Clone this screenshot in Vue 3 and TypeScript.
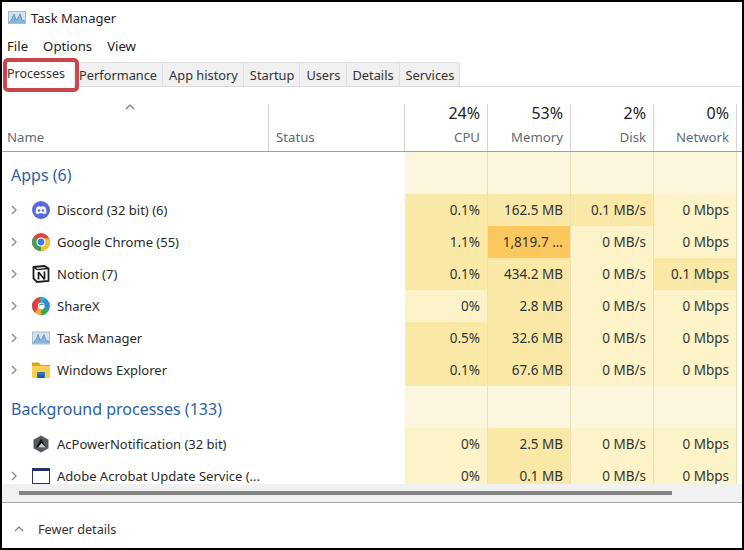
<script setup lang="ts">
type Row = { name: string; icon: string; expand: boolean; cells: { v: string; h: number }[] };
type Group = { title: string; rows: Row[] };

const c = (v: string, h = 0) => ({ v, h });

const groups: Group[] = [
  {
    title: 'Apps (6)',
    rows: [
      { name: 'Discord (32 bit) (6)', icon: 'discord', expand: true, cells: [c('0.1%', 1), c('162.5 MB', 1), c('0.1 MB/s', 1), c('0 Mbps')] },
      { name: 'Google Chrome (55)', icon: 'chrome', expand: true, cells: [c('1.1%', 1), c('1,819.7 ...', 3), c('0 MB/s'), c('0 Mbps')] },
      { name: 'Notion (7)', icon: 'notion', expand: true, cells: [c('0.1%', 1), c('434.2 MB', 1), c('0 MB/s'), c('0.1 Mbps', 1)] },
      { name: 'ShareX', icon: 'sharex', expand: true, cells: [c('0%'), c('2.8 MB', 1), c('0 MB/s'), c('0 Mbps')] },
      { name: 'Task Manager', icon: 'taskmgr', expand: true, cells: [c('0.5%', 1), c('32.6 MB', 1), c('0 MB/s'), c('0 Mbps')] },
      { name: 'Windows Explorer', icon: 'explorer', expand: true, cells: [c('0.1%', 1), c('67.6 MB', 1), c('0 MB/s'), c('0 Mbps')] },
    ],
  },
  {
    title: 'Background processes (133)',
    rows: [
      { name: 'AcPowerNotification (32 bit)', icon: 'acpower', expand: false, cells: [c('0%'), c('2.5 MB', 1), c('0 MB/s'), c('0 Mbps')] },
      { name: 'Adobe Acrobat Update Service (...', icon: 'window', expand: true, cells: [c('0%'), c('0.1 MB', 1), c('0 MB/s'), c('0 Mbps')] },
    ],
  },
];

const tabs = ['Performance', 'App history', 'Startup', 'Users', 'Details', 'Services'];
const metrics = [
  { pct: '24%', label: 'CPU' },
  { pct: '53%', label: 'Memory' },
  { pct: '2%', label: 'Disk' },
  { pct: '0%', label: 'Network' },
];
</script>

<template>
  <div class="frame">
    <div class="window">
      <div class="title">
        <svg class="ticon" viewBox="0 0 18 13">
          <rect x="0.5" y="0.5" width="17" height="12" fill="#d3e3f0" stroke="#a9bccb" />
          <path d="M1 12 L4 8 L6 3 L8 9 L10 7 L12 3 L14 9 L17 10 V12 H1 Z" fill="#84b6de" />
          <path d="M1 12 L4 8 L6 3 L8 9 L10 7 L12 3 L14 9 L17 10" fill="none" stroke="#4f8cc2" stroke-width="0.8" />
        </svg>
        <span>Task Manager</span>
      </div>
      <div class="menu"><span>File</span><span>Options</span><span>View</span></div>
      <div class="tabs">
        <div class="tab active">Processes</div>
        <div v-for="t in tabs" :key="t" class="tab">{{ t }}</div>
      </div>
      <div class="highlight"></div>

      <div class="head">
        <div class="hname">
          <svg class="sort" viewBox="0 0 10 6"><path d="M1 5 L5 1 L9 5" fill="none" stroke="#7a7a7a" stroke-width="1.2" /></svg>
          <span class="hlabel">Name</span>
        </div>
        <div class="hstatus"><span class="hlabel">Status</span></div>
        <div v-for="m in metrics" :key="m.label" class="hmetric">
          <span class="pct">{{ m.pct }}</span>
          <span class="hlabel">{{ m.label }}</span>
        </div>
      </div>

      <div class="body">
        <template v-for="g in groups" :key="g.title">
          <div class="grow">
            <div class="gtitle">{{ g.title }}</div>
            <div v-for="n in 4" :key="n" class="gcell"></div>
          </div>
          <div v-for="r in g.rows" :key="r.name" class="row">
            <div class="rname">
              <svg v-if="r.expand" class="chev" viewBox="0 0 6 10"><path d="M1 1 L5 5 L1 9" fill="none" stroke="#8a8a8a" stroke-width="1.4" /></svg>
              <span v-else class="chev"></span>

              <svg v-if="r.icon === 'discord'" class="icon" viewBox="0 0 18 18">
                <circle cx="9" cy="9" r="9" fill="#5b67dc" />
                <path d="M5 5.8 Q7 5 7.6 5.2 L7.9 5.8 H10.1 L10.4 5.2 Q11 5 13 5.8 Q14.6 8.6 14.4 12 Q13 13 11.6 13.2 L11 12.2 H7 L6.4 13.2 Q5 13 3.6 12 Q3.4 8.6 5 5.8 Z" fill="#fff" />
                <circle cx="7" cy="9.5" r="1.2" fill="#5b67dc" />
                <circle cx="11" cy="9.5" r="1.2" fill="#5b67dc" />
              </svg>
              <svg v-else-if="r.icon === 'chrome'" class="icon" viewBox="0 0 18 18">
                <circle cx="9" cy="9" r="9" fill="#d9473b" />
                <path d="M9 9 L1.2 4.5 A9 9 0 0 0 9 18 L13.5 9 Z" fill="#4a9c50" />
                <path d="M9 9 L9 18 A9 9 0 0 0 17.3 5.5 L9 5.5 Z" fill="#f2c230" />
                <circle cx="9" cy="9" r="4.6" fill="#fff" />
                <circle cx="9" cy="9" r="3.4" fill="#3f7fe0" />
              </svg>
              <svg v-else-if="r.icon === 'notion'" class="icon" viewBox="0 0 18 18">
                <path d="M1.5 2 L12.5 1 L16.5 3.5 V16 L5 17 L1.5 13.5 Z" fill="#fff" stroke="#1c1c1c" stroke-width="1.8" />
                <path d="M1.5 2 L5 4.6 L16.5 3.5" fill="none" stroke="#1c1c1c" stroke-width="1.4" />
                <path d="M6.5 7 V14.5 M6.5 7 L12.5 14.5 M12.5 6.5 V14.5" fill="none" stroke="#1c1c1c" stroke-width="1.7" />
              </svg>
              <svg v-else-if="r.icon === 'sharex'" class="icon" viewBox="0 0 18 18">
                <circle cx="9" cy="9" r="9" fill="#2a8fd8" />
                <path d="M9 0 A9 9 0 0 0 0 9 A9 9 0 0 0 3 15.7 L8 9 A4 4 0 0 1 11 4 Z" fill="#e2403a" />
                <path d="M3 15.7 A9 9 0 0 0 9 18 L11 13 A4 4 0 0 1 6 11 Z" fill="#f4b02a" />
                <path d="M9 18 A9 9 0 0 0 17 13 L12 10 A4 4 0 0 1 9 13.5 Z" fill="#3fa84d" />
                <path d="M9 0 A9 9 0 0 1 14 1.5 L10 5.5 L7.5 3 Z" fill="#27b3c7" />
                <circle cx="9.2" cy="9" r="3.4" fill="#fff" />
                <path d="M6.5 9.5 A3 3 0 0 1 12 8 A5 5 0 0 0 6.5 9.5 Z" fill="#2a8fd8" />
              </svg>
              <svg v-else-if="r.icon === 'taskmgr'" class="icon" viewBox="0 0 18 13" preserveAspectRatio="xMidYMid meet">
                <rect x="0.5" y="0.5" width="17" height="12" fill="#d3e3f0" stroke="#a9bccb" />
                <path d="M1 12 L4 8 L6 3 L8 9 L10 7 L12 3 L14 9 L17 10 V12 H1 Z" fill="#84b6de" />
                <path d="M1 12 L4 8 L6 3 L8 9 L10 7 L12 3 L14 9 L17 10" fill="none" stroke="#4f8cc2" stroke-width="0.8" />
              </svg>
              <svg v-else-if="r.icon === 'explorer'" class="icon" viewBox="0 0 18 16">
                <path d="M0 0.5 H7 L9 3 H18 V16 H0 Z" fill="#d9a520" />
                <path d="M0 4 H18 V16 H0 Z" fill="#fbcf4f" />
                <path d="M5 16 V11 Q5 10 6 10 H12 Q13 10 13 11 V16 Z" fill="#2f78b5" />
                <rect x="6" y="13" width="6" height="3" fill="#1f5f97" />
              </svg>
              <svg v-else-if="r.icon === 'acpower'" class="icon" viewBox="0 0 18 18">
                <path d="M9 0.5 L16.5 4.8 V13.2 L9 17.5 L1.5 13.2 V4.8 Z" fill="#55595e" />
                <path d="M9 3.5 L14 12.5 H4 Z" fill="#111315" />
                <path d="M9.5 8 L14 12.5 H6 Z" fill="#c7cbcf" />
              </svg>
              <svg v-else class="icon" viewBox="0 0 18 16">
                <rect x="0.5" y="0.5" width="17" height="15" fill="#fff" stroke="#26365c" />
                <rect x="1" y="1" width="16" height="2" fill="#1e2f80" />
              </svg>

              <span class="rtext">{{ r.name }}</span>
            </div>
            <div v-for="(cell, i) in r.cells" :key="i" class="cell" :class="'h' + cell.h">{{ cell.v }}</div>
          </div>
        </template>
      </div>

      <div class="hscroll"><div class="thumb"></div></div>

      <div class="footer">
        <svg class="fchev" viewBox="0 0 10 6"><path d="M1 5 L5 1 L9 5" fill="none" stroke="#777" stroke-width="1.1" /></svg>
        <span>Fewer details</span>
      </div>
    </div>
  </div>
</template>

<style>
html, body { margin: 0; background: #000; }
</style>

<style scoped>
.frame {
  width: 744px;
  height: 550px;
  box-sizing: border-box;
  padding: 2px 2px 2px 2px;
  background: #000;
  overflow: hidden;
}
.window {
  position: relative;
  width: 740px;
  height: 546px;
  background: #fff;
  display: flex;
  flex-direction: column;
  font-family: "Noto Sans", "Open Sans", sans-serif;
  font-size: 13px;
  color: #222;
}
.title {
  height: 31px;
  flex: none;
  display: flex;
  align-items: center;
  gap: 5px;
  padding-left: 6px;
}
.ticon { width: 18px; height: 13px; }
.menu {
  height: 26px;
  flex: none;
  display: flex;
  align-items: center;
  gap: 15px;
  padding-left: 5px;
  font-size: 13.2px;
}
.tabs {
  margin-top: 3px;
  height: 25px;
  flex: none;
  display: flex;
  box-sizing: border-box;
  border-bottom: 1px solid #dcdcdc;
  font-size: 12.8px;
}
.tab {
  padding: 0 5px 0 6px;
  background: #f0f0f0;
  border: 1px solid #dfdfdf;
  border-bottom: none;
  border-left: none;
  line-height: 24px;
  white-space: nowrap;
  color: #333;
}
.tab.active {
  width: 71px;
  box-sizing: border-box;
  padding: 0 0 0 5px;
  background: #fff;
  border: none;
  height: 28px;
  line-height: 23px;
  flex: none;
  font-size: 12.5px;
}
.highlight {
  position: absolute;
  left: 1px;
  top: 56px;
  width: 76px;
  height: 34px;
  box-sizing: border-box;
  border: 4px solid #c8464c;
  border-radius: 5px;
}
.head {
  margin-top: 17px;
  height: 48px;
  flex: none;
  display: grid;
  grid-template-columns: 267px 136px repeat(4, 83px);
  border-bottom: 1px solid #a0a0a0;
  box-sizing: border-box;
  color: #5f6b76;
  font-size: 13.2px;
}
.hname, .hstatus, .hmetric { border-right: 1px solid #d5d5d5; box-sizing: border-box; }
.hname { position: relative; display: flex; align-items: flex-end; padding: 0 0 5px 5px; }
.sort { position: absolute; left: 123px; top: 0; width: 10px; height: 6px; }
.hstatus { display: flex; align-items: flex-end; padding: 0 0 5px 7px; }
.hmetric {
  display: flex;
  flex-direction: column;
  align-items: flex-end;
  justify-content: space-between;
  padding: 0 7px 5px 0;
}
.hlabel { line-height: 18px; }
.pct { font-size: 16px; line-height: 18px; color: #222; }
.body {
  flex: 1;
  min-height: 0;
  overflow: hidden;
}
.grow, .row {
  display: grid;
  grid-template-columns: 403px repeat(4, 83px);
}
.grow { height: 42px; }
.gtitle {
  font-size: 16px;
  color: #2d62a3;
  padding: 10px 0 0 9px;
  line-height: 26px;
  white-space: nowrap;
}
.gcell {
  background: #fdf6df;
  border-right: 1px solid #ecdfb8;
  box-sizing: border-box;
}
.row { height: 32px; }
.rname {
  display: flex;
  align-items: center;
  padding-left: 9px;
  min-width: 0;
}
.chev { width: 6px; height: 10px; flex: none; margin-right: 15px; display: block; }
.icon { width: 18px; height: 18px; flex: none; margin-right: 7px; }
.rtext { white-space: nowrap; color: #2a2a2a; }
.cell {
  text-align: right;
  padding-right: 7px;
  line-height: 32px;
  box-sizing: border-box;
  border-right: 1px solid #ecdfb8;
  white-space: nowrap;
  color: #333;
  font-size: 13.5px;
}
.h0 { background: #fdf3c8; }
.h1 { background: #f9e8a6; }
.h3 { background: #fcc85e; }
.hscroll {
  height: 18px;
  flex: none;
  background: #f1f1f1;
  display: flex;
  align-items: center;
  padding-left: 17px;
}
.thumb { width: 653px; height: 4px; background: #858585; }
.footer {
  flex: none;
  height: 46px;
  border-top: 1px solid #a8a8a8;
  box-sizing: border-box;
  display: flex;
  align-items: center;
  padding: 6px 0 0 12px;
  gap: 14px;
  color: #333;
  font-size: 12.7px;
}
.fchev { width: 10px; height: 6px; }
</style>
